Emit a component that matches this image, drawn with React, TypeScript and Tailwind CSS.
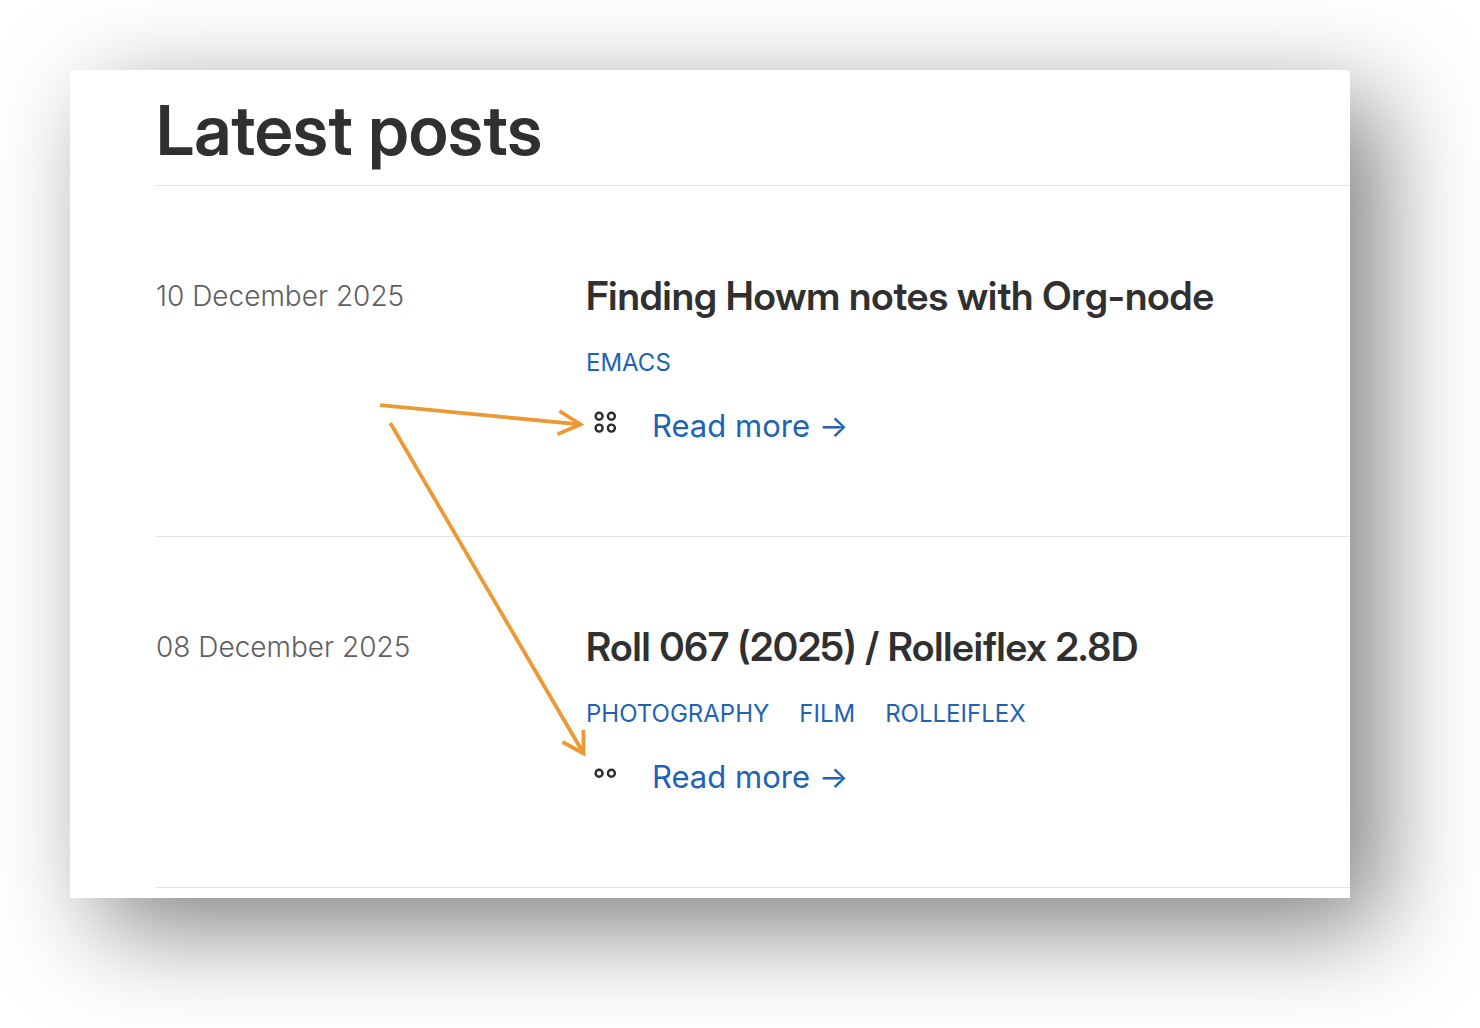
interface Post {
  id: string;
  date: string;
  dateTime: string;
  title: string;
  tags: string[];
  dots: number;
}

const posts: Post[] = [
  {
    id: 'howm-org-node',
    date: '10 December 2025',
    dateTime: '2025-12-10',
    title: 'Finding Howm notes with Org-node',
    tags: ['EMACS'],
    dots: 4
  },
  {
    id: 'roll-067',
    date: '08 December 2025',
    dateTime: '2025-12-08',
    title: 'Roll 067 (2025) / Rolleiflex 2.8D',
    tags: ['PHOTOGRAPHY', 'FILM', 'ROLLEIFLEX'],
    dots: 2
  }
];

// Small rings, two per row, that show how long a post is
function LengthDots({ count }: { count: number }) {
  const rows = Math.ceil(count / 2);
  const top = 12.2 - (rows - 1) * 5.9;

  return (
    <svg
      className="w-10 h-8 shrink-0"
      viewBox="0 0 40 32"
      fill="none"
      stroke="#2b2b2b"
      strokeWidth={2.4}
      aria-hidden="true"
    >
      {Array.from({ length: count }, (_, i) => (
        <circle key={i} cx={13.1 + (i % 2) * 12.3} cy={top + Math.floor(i / 2) * 11.8} r={3.5} />
      ))}
    </svg>
  );
}

function PostRow({ post }: { post: Post }) {
  return (
    <li className="grid grid-cols-[430px_1fr] border-b border-[#e4e4e4] pt-[86px] pb-[90px]">
      <time dateTime={post.dateTime} className="text-[28px] leading-[48px] font-light text-[#606060]">
        {post.date}
      </time>

      <div>
        <h2 className="font-['Inter_Display','Inter',sans-serif] text-[39px] leading-[48px] font-semibold text-[#303030]">
          {post.title}
        </h2>

        <div className="mt-[27px] flex gap-[30px] text-2xl leading-8 text-[#2063b4]">
          {post.tags.map((tag) => (
            <a key={tag} href={`#${tag.toLowerCase()}`}>
              {tag}
            </a>
          ))}
        </div>

        <div className="mt-[27px] flex items-center gap-[26px]">
          <LengthDots count={post.dots} />
          <a href={`#${post.id}`} className="text-[31px] leading-10 text-[#2063b4]">
            Read more →
          </a>
        </div>
      </div>
    </li>
  );
}

// Hand-placed arrows pointing at the rings of each post
function Arrows() {
  return (
    <svg
      className="absolute top-0 left-0 w-[600px] h-[828px] pointer-events-none"
      viewBox="70 70 600 828"
      fill="none"
      stroke="#ec9833"
      strokeWidth={3.8}
      aria-hidden="true"
    >
      <path d="M380 405.2L580 424.4M559.5 411L580.5 424.4L557.5 434.2" />
      <path d="M390.3 423L583.6 753.5M583.4 730L583.6 753.5L562.5 742" />
    </svg>
  );
}

export default function App() {
  return (
    <div className="min-h-screen overflow-hidden bg-white pt-[70px] pr-[130px] pb-[130px] pl-[70px] font-['Inter',sans-serif]">
      <main className="relative rounded-t-[4px] bg-white pt-5 pb-2.5 pl-[86px] shadow-[30px_30px_100px_rgba(0,0,0,0.5)]">
        <h1 className="border-b border-[#e4e4e4] pb-[15px] font-['Inter_Display','Inter',sans-serif] text-[69px] leading-[80px] font-semibold text-[#303030]">
          Latest posts
        </h1>

        <ul>
          {posts.map((post) => (
            <PostRow key={post.id} post={post} />
          ))}
        </ul>

        <Arrows />
      </main>
    </div>
  );
}
